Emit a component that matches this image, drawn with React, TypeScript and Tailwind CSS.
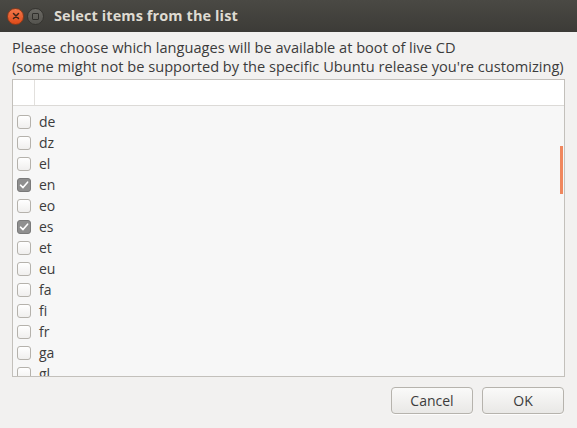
import React from "react";

const rows: [string, boolean][] = [
  ["de", false],
  ["dz", false],
  ["el", false],
  ["en", true],
  ["eo", false],
  ["es", true],
  ["et", false],
  ["eu", false],
  ["fa", false],
  ["fi", false],
  ["fr", false],
  ["ga", false],
  ["gl", false],
];

function Check({ checked }: { checked: boolean }) {
  if (checked) {
    return (
      <div className="w-[14px] h-[14px] rounded-[3px] border border-[#7a7a7a] bg-[#8f8f8f] flex items-center justify-center">
        <svg width="10" height="10" viewBox="0 0 10 10">
          <path d="M1.5 5.2 L4 7.6 L8.6 2.2" stroke="#ffffff" strokeWidth="1.6" fill="none" strokeLinecap="round" strokeLinejoin="round" />
        </svg>
      </div>
    );
  }
  return <div className="w-[14px] h-[14px] rounded-[3px] border border-[#b5b2ac] bg-gradient-to-b from-[#ffffff] to-[#f0efee]" />;
}

export default function App() {
  return (
    <div className="w-[577px] h-[428px] bg-[#f2f1f0] flex flex-col overflow-hidden" style={{ fontFamily: '"Open Sans", "DejaVu Sans", sans-serif' }}>
      <div className="h-[32px] bg-gradient-to-b from-[#4a4944] to-[#3c3b37] flex items-center shrink-0">
        <div className="ml-[7px] w-[17px] h-[17px] rounded-full bg-gradient-to-b from-[#f37749] to-[#df4a16] border border-[#8c3a1a] flex items-center justify-center">
          <svg width="8" height="8" viewBox="0 0 8 8">
            <path d="M1.5 1.5 L6.5 6.5 M6.5 1.5 L1.5 6.5" stroke="#3c2418" strokeWidth="1.5" strokeLinecap="round" />
          </svg>
        </div>
        <div className="ml-[3px] w-[17px] h-[17px] rounded-full bg-gradient-to-b from-[#6a6964] to-[#55544f] border border-[#353430] flex items-center justify-center">
          <div className="w-[7px] h-[7px] border-[1.5px] border-[#2f2e2b] rounded-[1px]" />
        </div>
        <div className="ml-[10px] text-[14.5px] font-bold text-[#dfdbd2] tracking-[0.1px]">Select items from the list</div>
      </div>
      <div className="px-[12px] pt-[6px] text-[14.6px] leading-[19px] text-[#3c3c3c] whitespace-nowrap">
        <div>Please choose which languages will be available at boot of live CD</div>
        <div>(some might not be supported by the specific Ubuntu release you're customizing)</div>
      </div>
      <div className="mx-[12px] mt-[3px] h-[298px] border border-[#c3c0bb] bg-[#f7f7f7] flex flex-col overflow-hidden relative shrink-0">
        <div className="h-[26px] bg-white border-b border-[#dcdad7] flex shrink-0">
          <div className="w-[22px] border-r border-[#e2e0dd]" />
        </div>
        <div className="pt-[5px] flex flex-col">
          {rows.map(([name, checked]) => (
            <div key={name} className="h-[21px] flex items-center shrink-0">
              <div className="ml-[4px]">
                <Check checked={checked} />
              </div>
              <span className="ml-[8px] text-[14px] text-[#3c3c3c]">{name}</span>
            </div>
          ))}
        </div>
        <div className="absolute right-[1px] top-[66px] w-[3px] h-[48px] bg-[#f0875e]" />
      </div>
      <div className="flex justify-end gap-[9px] mt-[10px] pr-[13px]">
        <button className="w-[82px] h-[27px] rounded-[4px] border border-[#b6b3ad] bg-gradient-to-b from-[#fafaf9] to-[#e9e8e6] text-[14px] text-[#3c3c3c] shadow-[0_1px_0_rgba(255,255,255,0.8)]">Cancel</button>
        <button className="w-[82px] h-[27px] rounded-[4px] border border-[#b6b3ad] bg-gradient-to-b from-[#fafaf9] to-[#e9e8e6] text-[14px] text-[#3c3c3c] shadow-[0_1px_0_rgba(255,255,255,0.8)]">OK</button>
      </div>
    </div>
  );
}
